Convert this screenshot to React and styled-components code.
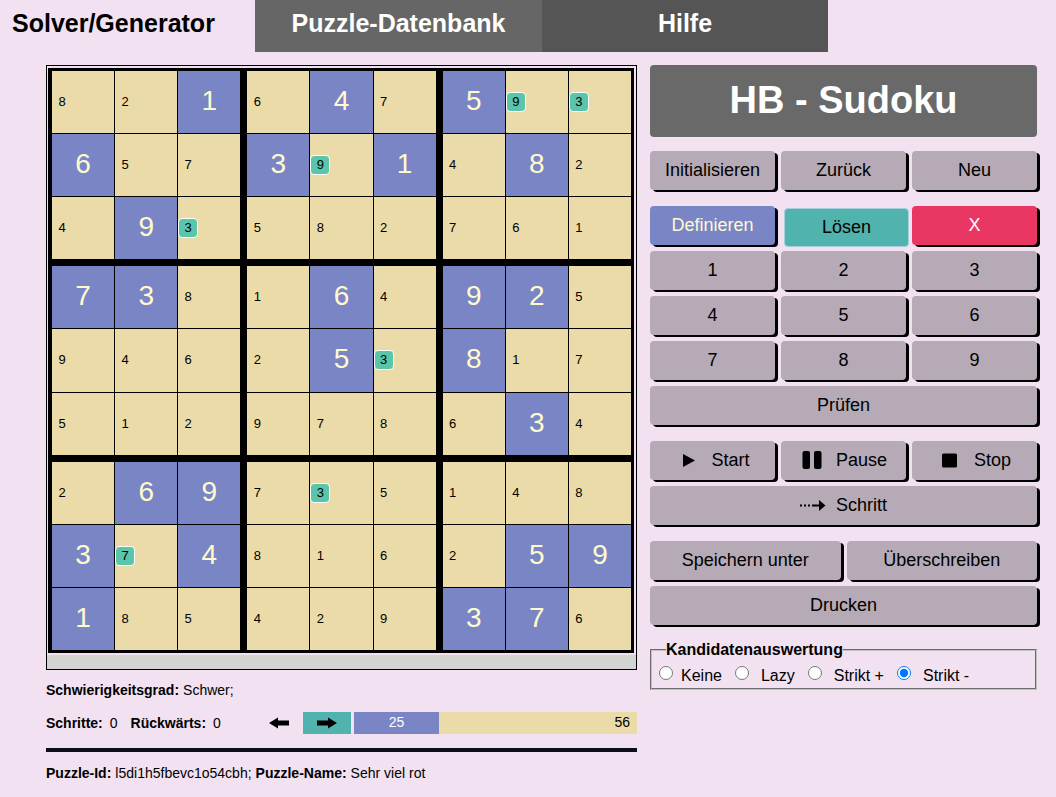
import React, { useState } from "react";
import styled, { createGlobalStyle, css } from "styled-components";

const GlobalStyle = createGlobalStyle`
  * { box-sizing: border-box; }
  body {
    margin: 0;
    background: #f2e1f0;
    color: #000;
    font-family: "Liberation Sans", Arial, sans-serif;
    font-size: 16px;
  }
`;

const TabBar = styled.nav`
  display: grid;
  grid-template-columns: 255fr 287fr 286fr 228fr;
`;

const Tab = styled.button`
  height: 52px;
  border: 0;
  padding: 0 12px 6px;
  font: bold 25px/30px "Liberation Sans", Arial, sans-serif;
  white-space: nowrap;
  text-align: ${(p) => (p.$active ? "left" : "center")};
  color: ${(p) => (p.$active ? "#000" : "#fff")};
  background: ${(p) => p.$tone || "transparent"};
`;

const Main = styled.main`
  display: grid;
  grid-template-columns: 591fr 387fr;
  gap: 13px;
  align-items: start;
  padding: 13px 19px 14px 46px;
`;

const BoardFrame = styled.div`
  border: 1px solid #000;
  padding: 2px 2px 0 1px;
`;

const Board = styled.div`
  display: grid;
  grid-template-columns: repeat(3, 1fr);
  grid-template-rows: repeat(3, 1fr);
  gap: 7px;
  aspect-ratio: 586 / 585;
  border: solid #000;
  border-width: 3px 3px 3px 4px;
  background: #000;
`;

const Block = styled.div`
  display: grid;
  grid-template-columns: repeat(3, 1fr);
  grid-template-rows: repeat(3, 1fr);
  gap: 1px;
`;

const Cell = styled.div`
  display: flex;
  align-items: center;
  min-width: 0;
  min-height: 0;
  background: #ebdba8;
  ${(p) =>
    p.$given &&
    css`
      justify-content: center;
      padding-bottom: 2px;
      background: #7a85c6;
      color: #fffacd;
      font-size: 28px;
      line-height: 32px;
    `}
`;

const Candidate = styled.span`
  width: 20px;
  height: 20px;
  border: 1px solid ${(p) => (p.$marked ? "#fff" : "transparent")};
  border-radius: 4px;
  background: ${(p) => (p.$marked ? "#5bc5ab" : "transparent")};
  font-size: 13px;
  line-height: 18px;
  text-align: center;
`;

const BoardFooter = styled.div`
  height: 14px;
  margin: 2px -2px 0 -1px;
  background: #d3d3d3;
`;

const StatusLine = styled.p`
  display: flex;
  gap: 4px;
  margin: 0;
  padding-top: ${(p) => p.$top}px;
  font-size: 14px;
  line-height: 16px;
  white-space: nowrap;
`;

const ProgressRow = styled.div`
  display: flex;
  align-items: center;
  height: 22px;
  margin-top: 14px;
`;

const Counters = styled.div`
  display: flex;
  flex: 209 1 0;
  gap: 13px;
  font-size: 14px;
  line-height: 16px;
  white-space: nowrap;
`;

const Counter = styled.span`
  display: flex;
  gap: 7px;
`;

const ArrowButton = styled.button`
  display: flex;
  align-items: center;
  justify-content: center;
  width: 48px;
  height: 22px;
  border: 0;
  padding: 0;
  background: ${(p) => (p.$active ? "#51b3ad" : "transparent")};
`;

const ProgressBar = styled.div`
  display: flex;
  flex: 283 1 0;
  height: 22px;
  margin-left: 3px;
  background: #ebdba8;
  font-size: 14px;
  line-height: 20px;
`;

const GivenShare = styled.span`
  width: 30%;
  background: #7a85c6;
  color: #fff;
  text-align: center;
`;

const OpenShare = styled.span`
  flex: 1;
  padding-right: 7px;
  text-align: right;
`;

const Divider = styled.hr`
  height: 4px;
  margin: 14px 0 0;
  border: 0;
  background: #0b0f1a;
`;

const Title = styled.h1`
  margin: 0 0 14px;
  height: 72px;
  border-radius: 4px;
  background: #696969;
  color: #fff;
  font-size: 38px;
  line-height: 71px;
  text-align: center;
`;

const ButtonGroup = styled.div`
  display: grid;
  grid-template-columns: repeat(6, 1fr);
  gap: 6px;
  margin-bottom: 16px;
`;

const tones = {
  plain: ["#b5aab5", "#000"],
  define: ["#7a85c6", "#fffacd"],
  solve: ["#51b3ad", "#000"],
  erase: ["#e93663", "#fff"],
};

const Button = styled.button`
  display: flex;
  align-items: center;
  justify-content: center;
  gap: 10px;
  grid-column: span ${(p) => p.$span || 2};
  min-width: 0;
  height: 39px;
  border: 0;
  border-radius: 4px;
  padding: 0 0 1px;
  background: ${(p) => tones[p.$tone || "plain"][0]};
  color: ${(p) => tones[p.$tone || "plain"][1]};
  box-shadow: 3px 2px 0 #000;
  font: 18px/20px "Liberation Sans", Arial, sans-serif;
  white-space: nowrap;
  ${(p) =>
    p.$pressed &&
    css`
      border: 1px solid #a9cfdc;
      box-shadow: none;
      transform: translate(3px, 2px);
    `}
`;

const Evaluation = styled.fieldset`
  display: flex;
  gap: 13px;
  margin: 0;
  height: 49px;
  border: 2px groove #c0c0c0;
  padding: 6px 7px 0;
`;

const Legend = styled.legend`
  margin-left: 7px;
  padding: 0;
  font-weight: bold;
  line-height: 18px;
`;

const Option = styled.label`
  display: flex;
  align-items: flex-start;
  gap: ${(p) => (p.$tight ? 8 : 12)}px;
  line-height: 22px;
  white-space: nowrap;
`;

const Radio = styled.input`
  width: 14px;
  height: 14px;
  margin: 1px 0 0;
`;

const PlayIcon = () => (
  <svg width="26" height="20" viewBox="0 0 26 20" aria-hidden="true">
    <path d="M8 4v13L20 10.5z" />
  </svg>
);
const PauseIcon = () => (
  <svg width="26" height="20" viewBox="0 0 26 20" aria-hidden="true">
    <rect x="2.5" y="1" width="7.5" height="18" rx="2" />
    <rect x="14" y="1" width="7.5" height="18" rx="2" />
  </svg>
);
const StopIcon = () => (
  <svg width="26" height="20" viewBox="0 0 26 20" aria-hidden="true">
    <rect x="4" y="3.5" width="15" height="14" rx="1.5" />
  </svg>
);
const StepIcon = () => (
  <svg width="26" height="20" viewBox="0 0 26 20" aria-hidden="true">
    <path d="M0 9.5h2v2H0zM4 9.5h2v2H4zM8 9.5h2v2H8zM12 9.5h7V5l6.5 5.5L19 16v-4.5h-7z" />
  </svg>
);
const ArrowIcon = ({ back }) => (
  <svg width="22" height="12" viewBox="0 0 22 12" aria-hidden="true">
    {back ? <path d="M1 6l9-5.5v3h11v5H10v3z" /> : <path d="M21 6l-9-5.5v3H1v5h11v3z" />}
  </svg>
);

// "g" marks a given number, "m" a marked candidate.
const puzzle = [
  "8 2 1g 6 4g 7 5g 9m 3m",
  "6g 5 7 3g 9m 1g 4 8g 2",
  "4 9g 3m 5 8 2 7 6 1",
  "7g 3g 8 1 6g 4 9g 2g 5",
  "9 4 6 2 5g 3m 8g 1 7",
  "5 1 2 9 7 8 6 3g 4",
  "2 6g 9g 7 3m 5 1 4 8",
  "3g 7m 4g 8 1 6 2 5g 9g",
  "1g 8 5 4 2 9 3g 7g 6",
].map((row) => row.split(" "));

const three = [0, 1, 2];

function SudokuBoard() {
  return (
    <BoardFrame>
      <Board>
        {three.flatMap((br) =>
          three.map((bc) => (
            <Block key={`${br}${bc}`}>
              {three.flatMap((r) =>
                three.map((c) => {
                  const [digit, kind] = puzzle[br * 3 + r][bc * 3 + c];
                  return (
                    <Cell key={`${r}${c}`} $given={kind === "g"}>
                      {kind === "g" ? digit : <Candidate $marked={kind === "m"}>{digit}</Candidate>}
                    </Cell>
                  );
                })
              )}
            </Block>
          ))
        )}
      </Board>
      <BoardFooter />
    </BoardFrame>
  );
}

export default function App() {
  const [mode, setMode] = useState("Strikt -");
  return (
    <>
      <GlobalStyle />
      <TabBar>
        <Tab $active>Solver/Generator</Tab>
        <Tab $tone="#666">Puzzle-Datenbank</Tab>
        <Tab $tone="#555">Hilfe</Tab>
      </TabBar>
      <Main>
        <section>
          <SudokuBoard />
          <StatusLine $top={12}>
            <b>Schwierigkeitsgrad:</b>
            <span>Schwer;</span>
          </StatusLine>
          <ProgressRow>
            <Counters>
              <Counter>
                <b>Schritte:</b>
                <span>0</span>
              </Counter>
              <Counter>
                <b>Rückwärts:</b>
                <span>0</span>
              </Counter>
            </Counters>
            <ArrowButton aria-label="Rückwärts">
              <ArrowIcon back />
            </ArrowButton>
            <ArrowButton $active aria-label="Vorwärts">
              <ArrowIcon />
            </ArrowButton>
            <ProgressBar>
              <GivenShare>25</GivenShare>
              <OpenShare>56</OpenShare>
            </ProgressBar>
          </ProgressRow>
          <Divider />
          <StatusLine $top={13}>
            <b>Puzzle-Id:</b>
            <span>l5di1h5fbevc1o54cbh;</span>
            <b>Puzzle-Name:</b>
            <span>Sehr viel rot</span>
          </StatusLine>
        </section>
        <section>
          <Title>HB - Sudoku</Title>
          <ButtonGroup>
            <Button>Initialisieren</Button>
            <Button>Zurück</Button>
            <Button>Neu</Button>
          </ButtonGroup>
          <ButtonGroup>
            <Button $tone="define">Definieren</Button>
            <Button $tone="solve" $pressed>Lösen</Button>
            <Button $tone="erase">X</Button>
            {[1, 2, 3, 4, 5, 6, 7, 8, 9].map((n) => (
              <Button key={n}>{n}</Button>
            ))}
            <Button $span={6}>Prüfen</Button>
          </ButtonGroup>
          <ButtonGroup>
            <Button><PlayIcon />Start</Button>
            <Button><PauseIcon />Pause</Button>
            <Button><StopIcon />Stop</Button>
            <Button $span={6}><StepIcon />Schritt</Button>
          </ButtonGroup>
          <ButtonGroup>
            <Button $span={3}>Speichern unter</Button>
            <Button $span={3}>Überschreiben</Button>
            <Button $span={6}>Drucken</Button>
          </ButtonGroup>
          <Evaluation>
            <Legend>Kandidatenauswertung</Legend>
            {["Keine", "Lazy", "Strikt +", "Strikt -"].map((name) => (
              <Option key={name} $tight={name === "Keine"}>
                <Radio
                  type="radio"
                  name="evaluation"
                  checked={mode === name}
                  onChange={() => setMode(name)}
                />
                {name}
              </Option>
            ))}
          </Evaluation>
        </section>
      </Main>
    </>
  );
}
